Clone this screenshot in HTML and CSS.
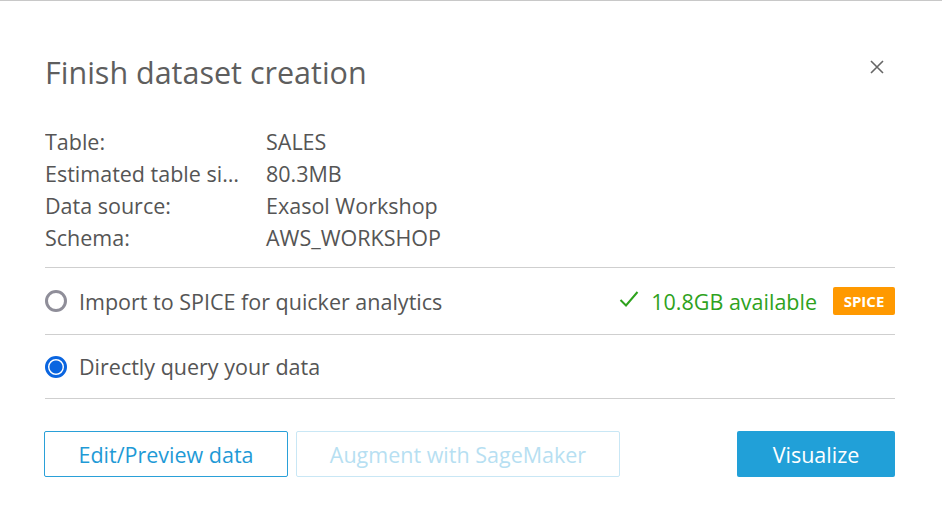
FILE: index.html
```html
<!DOCTYPE html>
<html>
<head>
<meta charset="utf-8">
<link rel="stylesheet" href="styles.css">
</head>
<body>
<div class="dialog">
  <div class="header">
    <h1 class="title">Finish dataset creation</h1>
    <button class="close" aria-label="Close">
      <svg width="14" height="14" viewBox="0 0 14 14"><path d="M1 1L13 13M13 1L1 13" stroke="#666" stroke-width="1.6" fill="none"/></svg>
    </button>
  </div>
  <div class="details">
    <div class="label">Table:</div><div class="value">SALES</div>
    <div class="label">Estimated table size:</div><div class="value">80.3MB</div>
    <div class="label">Data source:</div><div class="value">Exasol Workshop</div>
    <div class="label">Schema:</div><div class="value">AWS_WORKSHOP</div>
  </div>
  <div class="option first">
    <span class="radio"></span>
    <span class="option-text">Import to SPICE for quicker analytics</span>
    <span class="avail">
      <svg class="check" width="20" height="18" viewBox="0 0 20 18"><path d="M1.5 10L7 15.5L18.5 2" stroke="#2ea21d" stroke-width="2" fill="none"/></svg>
      10.8GB available
    </span>
    <span class="badge">SPICE</span>
  </div>
  <div class="option second">
    <span class="radio checked"></span>
    <span class="option-text">Directly query your data</span>
  </div>
  <div class="actions">
    <button class="btn outline">Edit/Preview data</button>
    <button class="btn disabled">Augment with SageMaker</button>
    <span class="spacer"></span>
    <button class="btn primary">Visualize</button>
  </div>
</div>
</body>
</html>
```
FILE: styles.css
```css
html, body {
  margin: 0;
  padding: 0;
  background: #fff;
}
body {
  font-family: "Open Sans", "Noto Sans", sans-serif;
  color: #555;
  border-top: 1px solid #c8c8c8;
}
.dialog {
  padding: 0 47px 0 45px;
}
.header {
  display: flex;
  justify-content: space-between;
  height: 125px;
}
.title {
  margin: 0;
  font-weight: 400;
  font-size: 30.5px;
  color: #5e5e5e;
  margin-top: 50px;
  line-height: 42px;
}
.close {
  background: none;
  border: 0;
  padding: 0;
  margin-right: 11px;
  align-self: flex-start;
  margin-top: 59px;
  display: flex;
}
.details {
  display: grid;
  grid-template-columns: 198px 1fr;
  column-gap: 23px;
  font-size: 21.5px;
  line-height: 32px;
  padding-bottom: 13px;
  border-bottom: 1px solid #cfcfcf;
}
.label {
  white-space: nowrap;
  overflow: hidden;
  text-overflow: ellipsis;
}
.option {
  display: flex;
  align-items: center;
  border-bottom: 1px solid #cfcfcf;
  font-size: 21.5px;
}
.option.first { height: 66px; }
.option.second { height: 63px; }
.radio {
  width: 16px;
  height: 16px;
  border: 3px solid #8f8e99;
  border-radius: 50%;
  box-sizing: content-box;
  margin-right: 12px;
  flex: none;
}
.radio.checked {
  border-color: #0a65e0;
  background: radial-gradient(circle, #0a65e0 0 6px, #fff 7px);
}
.option-text {
  flex: 1;
}
.avail {
  display: flex;
  align-items: center;
  color: #2ea21d;
  font-size: 21.5px;
  gap: 12px;
  margin-right: 16px;
}
.check { margin-top: -4px; }
.badge {
  background: #ff9900;
  color: #fff;
  font-weight: 700;
  font-size: 15px;
  border-radius: 2px;
  width: 62px;
  height: 28px;
  display: flex;
  align-items: center;
  justify-content: center;
}
.actions {
  display: flex;
  align-items: center;
  gap: 8px;
  margin-top: 32px;
  margin-left: -1px;
}
.spacer { flex: 1; }
.btn {
  font-family: "Open Sans", "Noto Sans", sans-serif;
  font-size: 21.5px;
  height: 46px;
  border-radius: 2px;
  background: #fff;
  padding: 0;
}
.btn.outline {
  width: 244px;
  border: 1px solid #2aa0d8;
  color: #1f9ad6;
}
.btn.disabled {
  width: 324px;
  border: 1px solid #c9e7f5;
  color: #b7dff2;
}
.btn.primary {
  width: 158px;
  border: 0;
  background: #21a0d8;
  color: #fff;
  font-weight: 500;
}
```
